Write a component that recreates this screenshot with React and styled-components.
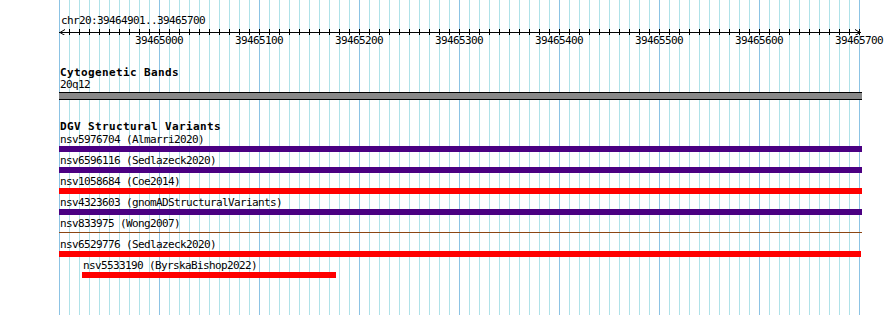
import React from "react";
import styled, { createGlobalStyle } from "styled-components";

const GlobalStyle = createGlobalStyle`
    html, body {
        margin: 0;
        padding: 0;
        background: #fff;
    }
    body {
        font-family: "DejaVu Sans Mono", "Liberation Mono", monospace;
        font-size: 11px;
        letter-spacing: -0.62px;
        color: #000;
    }
`;

const START = 39464900;
const END = 39465700;
const OFFSET = 59;

const dgv = [
    { name: "nsv5976704", study: "Almarri2020", color: "#4b0082", start: 0, width: 803 },
    { name: "nsv6596116", study: "Sedlazeck2020", color: "#4b0082", start: 0, width: 803 },
    { name: "nsv1058684", study: "Coe2014", color: "#ff0000", start: 0, width: 803 },
    { name: "nsv4323603", study: "gnomADStructuralVariants", color: "#4b0082", start: 0, width: 803 },
    { name: "nsv833975", study: "Wong2007", color: "#8b4513", start: 0, width: 803, thin: true },
    { name: "nsv6529776", study: "Sedlazeck2020", color: "#ff0000", start: 0, width: 802 },
    { name: "nsv5533190", study: "ByrskaBishop2022", color: "#ff0000", start: 23, width: 254 },
];

const App = () => {
    const labels = [];
    for (let p = START + 100; p <= END; p += 100) labels.push(p);

    const ticks = [];
    for (let x = OFFSET + 10; x < 860; x += 10) ticks.push(x);

    const grid = [];
    for (let bp = START; bp <= END; bp += 10) grid.push(bp);

    return (
        <>
            <GlobalStyle />
            <Canvas>
                <GridLines>
                    {grid.map((bp) => (
                        <GridLine key={bp} $major={bp % 100 === 0} $last={bp === END} />
                    ))}
                </GridLines>
                <Content>
                    <Ruler>
                        <Location>chr20:39464901..39465700</Location>
                        <Axis width="890" height="8" viewBox="0 0 890 8">
                            <line x1="59" y1="5.5" x2="861" y2="5.5" stroke="#000" strokeWidth="1" />
                            <polyline points="65,2.5 60,5.5 65,8.5" fill="none" stroke="#000" strokeWidth="1" />
                            <polyline points="855,2.5 860,5.5 855,8.5" fill="none" stroke="#000" strokeWidth="1" />
                            {ticks.map((x) => (
                                <line key={x} x1={x + 0.5} y1="2" x2={x + 0.5} y2="8" stroke="#000" strokeWidth="1" />
                            ))}
                        </Axis>
                        <ScaleRow>
                            {labels.map((p) => (
                                <ScaleLabel key={p}>{p}</ScaleLabel>
                            ))}
                        </ScaleRow>
                    </Ruler>

                    <Track $top={20}>
                        <TrackTitle>Cytogenetic Bands</TrackTitle>
                        <Feature>
                            <FeatureLabel>20q12</FeatureLabel>
                            <Band />
                        </Feature>
                    </Track>

                    <Track $top={21}>
                        <TrackTitle>DGV Structural Variants</TrackTitle>
                        {dgv.map((f) => (
                            <Feature key={f.name} $start={f.start}>
                                <FeatureLabel $tall>
                                    {f.name} ({f.study})
                                </FeatureLabel>
                                <Bar $color={f.color} $thin={f.thin} style={{ width: f.width }} />
                            </Feature>
                        ))}
                    </Track>
                </Content>
            </Canvas>
        </>
    );
};

export default App;

const Canvas = styled.div`
    position: relative;
    width: 890px;
    height: 315px;
    overflow: hidden;
    background: #fff;
`;

/* vertical grid behind the tracks: minor every 10bp, major every 100bp */
const GridLines = styled.div`
    position: absolute;
    top: 0;
    bottom: 0;
    left: 59px;
    display: flex;
`;

const GridLine = styled.div`
    flex: 0 0 ${({ $last }) => ($last ? "1px" : "10px")};
    box-sizing: border-box;
    border-left: 1px solid ${({ $major }) => ($major ? "#8cc3e4" : "#b0e2e9")};
`;

const Content = styled.div`
    position: relative;
`;

const Ruler = styled.div`
    padding-top: 15px;
`;

const Location = styled.div`
    padding-left: 61px;
    line-height: 12px;
    height: 12px;
    white-space: nowrap;
`;

const Axis = styled.svg`
    display: block;
`;

const ScaleRow = styled.div`
    display: flex;
    padding-left: 109px;
    height: 12px;
    line-height: 12px;
`;

const ScaleLabel = styled.div`
    flex: 0 0 100px;
    text-align: center;
    white-space: nowrap;
`;

const Track = styled.div`
    margin-top: ${({ $top }) => $top}px;
`;

const TrackTitle = styled.div`
    padding-left: 60px;
    font-weight: bold;
    font-size: 11px;
    letter-spacing: 0.38px;
    line-height: 12px;
    height: 12px;
    white-space: nowrap;
`;

const Feature = styled.div`
    display: flex;
    flex-direction: column;
    padding-left: ${({ $start }) => OFFSET + ($start || 0)}px;
    margin-bottom: 2px;
`;

const FeatureLabel = styled.div`
    padding-left: 1px;
    line-height: ${({ $tall }) => ($tall ? "13px" : "12px")};
    height: ${({ $tall }) => ($tall ? "13px" : "12px")};
    margin-bottom: ${({ $tall }) => ($tall ? "0" : "1px")};
    white-space: nowrap;
`;

const Band = styled.div`
    width: 803px;
    height: 6px;
    background: #888;
    border-top: 1px solid #000;
    border-bottom: 1px solid #000;
`;

const Bar = styled.div`
    height: ${({ $thin }) => ($thin ? "1px" : "6px")};
    margin: ${({ $thin }) => ($thin ? "2px 0 3px" : "0")};
    background: ${({ $color }) => $color};
`;
